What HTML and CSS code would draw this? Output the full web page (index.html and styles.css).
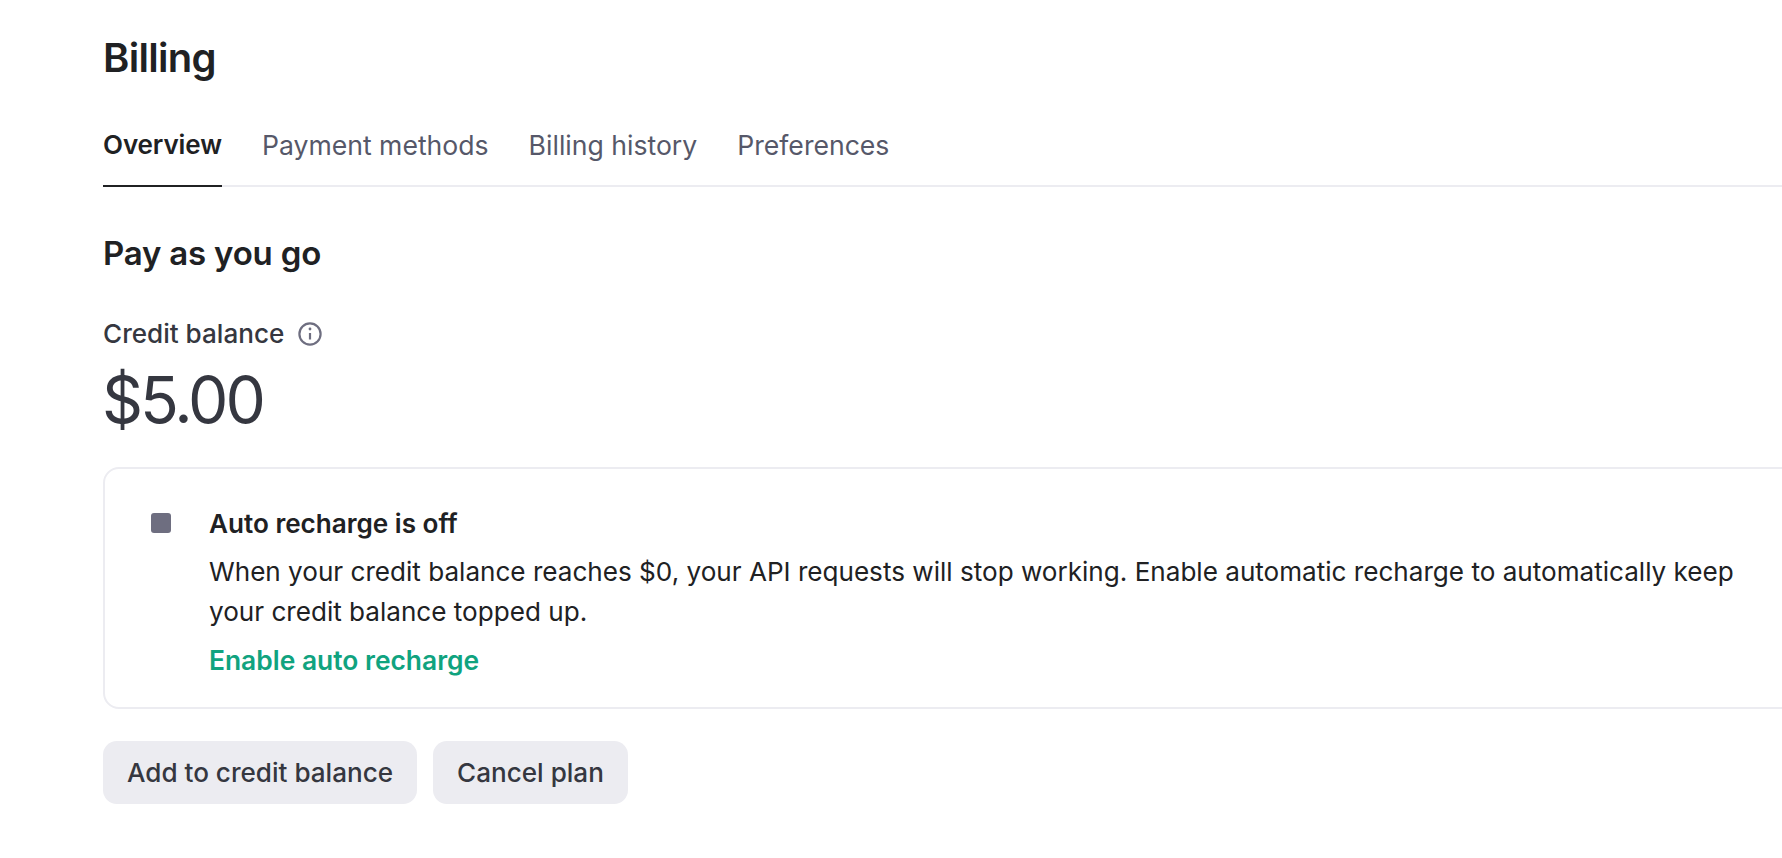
FILE: index.html
```html
<!DOCTYPE html>
<html lang="en">

<head>
    <meta charset="UTF-8">
    <title>Billing</title>
    <link rel="stylesheet" href="styles.css">
</head>

<body>
    <div class="main">
        <h1 class="title">Billing</h1>

        <div class="tabs">
            <a href="#" class="tab active">Overview</a>
            <a href="#" class="tab">Payment methods</a>
            <a href="#" class="tab">Billing history</a>
            <a href="#" class="tab">Preferences</a>
        </div>

        <h2 class="plan">Pay as you go</h2>

        <div class="balance-label">
            <span>Credit balance</span>
            <svg class="info" viewBox="0 0 24 24" width="24" height="24" fill="none" stroke="currentColor" stroke-width="2.2">
                <circle cx="12" cy="12" r="10.6"></circle>
                <path d="M12 11v6.5"></path>
                <circle cx="12" cy="7" r="1.4" fill="currentColor" stroke="none"></circle>
            </svg>
        </div>
        <div class="balance">$5.00</div>

        <div class="card">
            <div class="status"></div>
            <div class="card-body">
                <div class="card-title">Auto recharge is off</div>
                <p class="card-text">When your credit balance reaches $0, your API requests will stop working. Enable automatic recharge to automatically keep your credit balance topped up.</p>
                <a href="#" class="card-link">Enable auto recharge</a>
            </div>
        </div>

        <div class="button-container">
            <button class="button">Add to credit balance</button>
            <button class="button">Cancel plan</button>
        </div>
    </div>
</body>

</html>
```

FILE: styles.css
```css
:root {
    --color-dark: #202123;
    --color-text: #353740;
    --color-muted: #565869;
    --color-icon: #6e6e80;
    --color-line: #ececf1;
    --color-green: #10a37f;
}

* {
    margin: 0;
    padding: 0;
    box-sizing: border-box;
}

html,
body {
    height: 100%;
    overflow: hidden;
}

body {
    background-color: #fff;
    color: var(--color-dark);
    font-family: 'Inter', 'Liberation Sans', sans-serif;
}

.main {
    padding: 32px 0 0 103px;
}

.title {
    font-size: 40px;
    line-height: 52px;
    font-weight: 600;
    letter-spacing: -0.7px;
}

.tabs {
    display: flex;
    gap: 40px;
    margin-top: 30px;
    border-bottom: 2px solid var(--color-line);
}

.tab {
    height: 73px;
    padding-top: 13px;
    margin-bottom: -2px;
    font-size: 26.6px;
    line-height: 36px;
    color: var(--color-muted);
    text-decoration: none;
}

.tab.active {
    font-size: 26px;
    letter-spacing: -0.1px;
    font-weight: 600;
    color: var(--color-dark);
    border-bottom: 2px solid var(--color-dark);
}

.plan {
    margin-top: 44px;
    font-size: 33px;
    line-height: 44px;
    font-weight: 600;
    letter-spacing: -0.2px;
}

.balance-label {
    display: flex;
    align-items: center;
    gap: 14px;
    margin-top: 41px;
    font-size: 26.1px;
    line-height: 36px;
    font-weight: 500;
    color: var(--color-text);
}

.info {
    color: var(--color-icon);
}

.balance {
    margin-top: 10px;
    margin-left: -1px;
    font-size: 64px;
    line-height: 76px;
    letter-spacing: -3px;
    color: var(--color-text);
}

.card {
    display: flex;
    gap: 38px;
    margin-top: 29px;
    margin-right: -24px;
    padding: 37px 0 29px 46px;
    border: 2px solid var(--color-line);
    border-radius: 16px;
}

.status {
    flex: none;
    width: 20px;
    height: 20px;
    margin-top: 7px;
    border-radius: 3px;
    background-color: var(--color-icon);
}

.card-body {
    width: 1540px;
}

.card-title {
    font-size: 26.1px;
    line-height: 36px;
    font-weight: 600;
}

.card-text {
    margin-top: 10px;
    font-size: 26.1px;
    line-height: 40px;
}

.card-link {
    display: block;
    margin-top: 10px;
    font-size: 26.4px;
    line-height: 36px;
    font-weight: 600;
    color: var(--color-green);
    text-decoration: none;
}

.button-container {
    display: flex;
    gap: 16px;
    margin-top: 32px;
}

.button {
    height: 63px;
    padding: 0 24px;
    border: none;
    border-radius: 14px;
    background-color: var(--color-line);
    color: var(--color-text);
    font-family: inherit;
    font-size: 26.1px;
    font-weight: 500;
    cursor: pointer;
}
```
